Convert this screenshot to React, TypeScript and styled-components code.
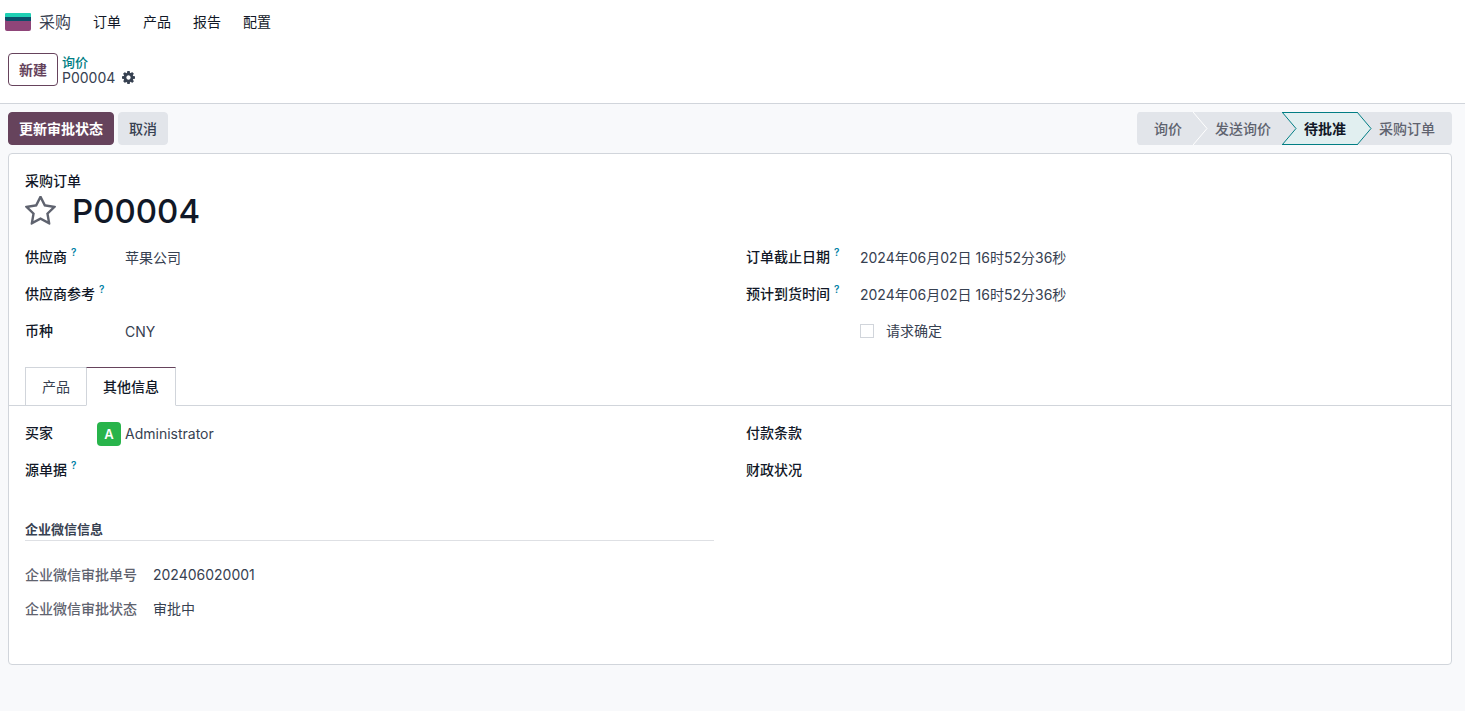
import React, { useState } from 'react';
import styled, { createGlobalStyle, css } from 'styled-components';

const c = {
  text: '#374151',
  dark: '#111827',
  muted: '#5f636f',
  line: '#d1d5db',
  soft: '#e2e5ea',
  page: '#f8f9fb',
  brand: '#66435c',
  teal: '#017e84',
  tealSoft: '#e1eff0',
};

const GlobalStyle = createGlobalStyle`
  *, *::before, *::after { box-sizing: border-box; }
  body {
    margin: 0;
    background: ${c.page};
    color: ${c.text};
    font: 400 14px/20px Inter, "Noto Sans CJK SC", sans-serif;
  }
  button { font: inherit; color: inherit; cursor: pointer; }
  a { text-decoration: none; }
  h1, h2, dl, dd { margin: 0; }
`;

const Header = styled.header`
  background: #fff;
  border-bottom: 1px solid ${c.line};
`;

const NavBar = styled.nav`
  display: flex;
  align-items: center;
  height: 44px;
  padding-left: 5px;
`;

const AppLogo = styled.svg`
  width: 26px;
  height: 18px;
  margin-right: 8px;
`;

const AppName = styled.a`
  color: ${c.text};
  font-size: 16px;
  margin-right: 11px;
`;

const NavLink = styled.a`
  color: ${c.dark};
  padding: 0 11px;
`;

const ControlPanel = styled.div`
  display: flex;
  align-items: center;
  gap: 4px;
  padding: 9px 8px 17px;
`;

const Button = styled.button<{ $kind: 'primary' | 'secondary' | 'outline' }>`
  height: 33px;
  padding: 0 10px;
  border: 1px solid ${c.brand};
  border-radius: 4px;
  font-weight: 600;
  ${({ $kind }) =>
    $kind === 'primary'
      ? css`
          background: ${c.brand};
          color: #fff;
        `
      : $kind === 'secondary'
        ? css`
            background: ${c.soft};
            border-color: ${c.soft};
            font-weight: 500;
          `
        : css`
            background: #fff;
            color: ${c.brand};
          `}
`;

const Breadcrumb = styled.div`
  display: flex;
  flex-direction: column;
  line-height: 16px;
`;

const ParentLink = styled.a`
  color: ${c.teal};
  font-size: 13px;
  font-weight: 500;
`;

const Current = styled.div`
  display: flex;
  align-items: center;
  gap: 7px;
`;

const GearButton = styled.button`
  display: flex;
  padding: 0;
  border: 0;
  background: none;
`;

const Main = styled.main`
  padding: 8px 13px 46px 8px;
`;

const StatusRow = styled.div`
  display: flex;
  justify-content: space-between;
  margin-bottom: 8px;
`;

const Actions = styled.div`
  display: flex;
  gap: 4px;
`;

const StatusBar = styled.div`
  display: flex;
  border-radius: 4px;
  overflow: hidden;
`;

const Step = styled.button<{ $active: boolean; $order: number }>`
  position: relative;
  z-index: ${({ $order }) => 10 - $order};
  height: 33px;
  padding: 0 11px 0 22px;
  border: 0;
  border-block: 1px solid ${({ $active }) => ($active ? c.teal : c.soft)};
  background: ${({ $active }) => ($active ? c.tealSoft : c.soft)};
  color: ${({ $active }) => ($active ? c.dark : c.muted)};
  font-weight: ${({ $active }) => ($active ? 600 : 500)};
  &:first-child { padding-left: 17px; }
  &:last-child { padding-right: 17px; }
`;

const Chevron = styled.svg`
  position: absolute;
  top: -1px;
  left: 100%;
  width: 15px;
  height: 33px;
`;

const Sheet = styled.section`
  border: 1px solid ${c.line};
  border-radius: 4px;
  background: #fff;
  padding: 17px 0 38px;
`;

const Heading = styled.div`
  padding: 0 16px;
  color: ${c.dark};
`;

const Kind = styled.div`
  font-weight: 500;
`;

const TitleRow = styled.div`
  display: flex;
  align-items: center;
  gap: 16px;
  height: 40px;
  margin-bottom: 8px;
`;

const StarButton = styled.button`
  display: flex;
  padding: 0;
  border: 0;
  background: none;
  color: ${c.muted};
`;

const Title = styled.h1`
  font-size: 33px;
  line-height: 40px;
  font-weight: 500;
`;

const Columns = styled.div`
  display: grid;
  grid-template-columns: 1fr 1fr;
  gap: 32px;
  padding: 0 16px;
`;

const Fields = styled.dl<{ $label: number; $row?: number }>`
  display: grid;
  grid-template-columns: ${({ $label }) => $label}px 1fr;
  grid-auto-rows: ${({ $row = 37 }) => $row}px;
  align-content: start;
  align-items: center;
`;

const Term = styled.dt<{ $muted?: boolean }>`
  padding-bottom: ${({ $muted }) => ($muted ? 0 : 2)}px;
  color: ${({ $muted }) => ($muted ? c.muted : c.dark)};
  font-weight: 500;
  white-space: nowrap;
`;

const Help = styled.sup`
  margin-left: 4px;
  color: #0180a5;
  font-size: 10px;
  font-weight: 600;
  line-height: 1;
`;

const Value = styled.dd`
  display: flex;
  align-items: center;
  gap: 4px;
`;

const CheckLabel = styled.label`
  display: flex;
  align-items: center;
  gap: 12px;
  padding-bottom: 2px;
`;

const CheckBox = styled.input`
  appearance: none;
  width: 14px;
  height: 14px;
  margin: 0;
  border: 1px solid ${c.line};
  background: #fff;
  &:checked { background: ${c.brand}; }
`;

const Tabs = styled.div`
  display: flex;
  margin: 17px 0 9px;
  padding-left: 16px;
  border-bottom: 1px solid ${c.line};
`;

const Tab = styled.button<{ $active: boolean }>`
  height: 39px;
  margin-bottom: -1px;
  padding: 0 16px;
  border: 1px solid ${c.line};
  background: #fff;
  & + & { margin-left: -1px; }
  ${({ $active }) =>
    $active &&
    css`
      position: relative;
      border-top-color: ${c.brand};
      border-bottom-color: #fff;
      color: ${c.dark};
      font-weight: 500;
    `}
`;

const Avatar = styled.span`
  display: grid;
  place-items: center;
  width: 24px;
  height: 24px;
  border-radius: 4px;
  background: #28b44b;
  color: #fff;
  font-size: 13px;
  font-weight: 600;
`;

const WeCom = styled.div`
  margin-top: 30px;
`;

const SectionTitle = styled.h2`
  margin-bottom: 17px;
  padding-bottom: 1px;
  border-bottom: 1px solid #dee0e4;
  font-size: 13px;
  line-height: 20px;
  font-weight: 600;
`;

const steps = ['询价', '发送询价', '待批准', '采购订单'];

const COG =
  'M1152 896q0-106-75-181t-181-75-181 75-75 181 75 181 181 75 181-75 75-181zm512-109v222q0 12-8 23t-20 13l-185 28q-19 54-39 91 35 50 107 138 10 12 10 25t-9 23q-27 37-99 108t-94 71q-12 0-26-9l-138-108q-44 23-91 38-16 136-29 186-7 28-36 28h-222q-14 0-24.5-8.5t-11.5-21.5l-28-184q-49-16-90-37l-141 107q-10 9-25 9-14 0-25-11-126-114-165-168-7-10-7-23 0-12 8-23 15-21 51-66.5t54-70.5q-27-50-41-99l-183-27q-13-2-21-12.5t-8-23.5v-222q0-12 8-23t19-13l186-28q14-46 39-92-40-57-107-138-10-12-10-24 0-10 9-23 26-36 98.5-107.5t94.5-71.5q13 0 26 10l138 107q44-23 91-38 16-136 29-186 7-28 36-28h222q14 0 24.5 8.5t11.5 21.5l28 184q49 16 90 37l142-107q9-9 24-9 13 0 25 10 129 119 165 170 7 8 7 22 0 12-8 23-15 21-51 66.5t-54 70.5q26 50 41 98l183 28q13 2 21 12.5t8 23.5z';

const STAR =
  'M1201 1004l306-297-422-62-189-382-189 382-422 62 306 297-73 421 378-199 377 199zm527-357q0 22-26 48l-363 354 86 500q1 7 1 20 0 50-41 50-19 0-40-12l-449-236-449 236q-22 12-40 12-21 0-31.5-14.5t-10.5-35.5q0-6 2-20l86-500-364-354q-25-27-25-48 0-37 56-46l502-73 225-455q19-41 49-41t49 41l225 455 502 73q56 9 56 46z';

export default function App() {
  const [tab, setTab] = useState(1);
  const activeStep = 2;

  return (
    <>
      <GlobalStyle />
      <Header>
        <NavBar>
          <AppLogo viewBox="0 0 26 18" aria-hidden="true">
            <path d="M0 4h26v12a2 2 0 0 1-2 2H2a2 2 0 0 1-2-2z" fill="#8f4579" />
            <path d="M0 4h26v4H2a2 2 0 0 1-2-2z" fill="#0b4f69" />
            <path d="M1 0h24a1 1 0 0 1 1 1v3H0V1a1 1 0 0 1 1-1z" fill="#1fd0b4" />
          </AppLogo>
          <AppName href="#purchase">采购</AppName>
          {['订单', '产品', '报告', '配置'].map((item) => (
            <NavLink key={item} href="#menu">{item}</NavLink>
          ))}
        </NavBar>
        <ControlPanel>
          <Button $kind="outline">新建</Button>
          <Breadcrumb>
            <ParentLink href="#rfq">询价</ParentLink>
            <Current>
              <span>P00004</span>
              <GearButton aria-label="设置">
                <svg width="13" height="13" viewBox="128 128 1536 1536" fill="currentColor"><path d={COG} /></svg>
              </GearButton>
            </Current>
          </Breadcrumb>
        </ControlPanel>
      </Header>

      <Main>
        <StatusRow>
          <Actions>
            <Button $kind="primary">更新审批状态</Button>
            <Button $kind="secondary">取消</Button>
          </Actions>
          <StatusBar>
            {steps.map((step, i) => {
              const active = i === activeStep;
              const edge = active || i + 1 === activeStep ? c.teal : '#fff';
              return (
                <Step key={step} $active={active} $order={i}>
                  {step}
                  {i < steps.length - 1 && (
                    <Chevron viewBox="0 0 15 33" aria-hidden="true">
                      <path d="M0 0L14 16.5L0 33z" fill={active ? c.tealSoft : c.soft} />
                      <path d="M0 0L14 16.5L0 33" fill="none" stroke={edge} />
                    </Chevron>
                  )}
                </Step>
              );
            })}
          </StatusBar>
        </StatusRow>

        <Sheet>
          <Heading>
            <Kind>采购订单</Kind>
            <TitleRow>
              <StarButton aria-label="优先">
                <svg width="31" height="31" viewBox="64 80 1664 1664" fill="currentColor"><path d={STAR} /></svg>
              </StarButton>
              <Title>P00004</Title>
            </TitleRow>
          </Heading>

          <Columns>
            <Fields $label={100}>
              <Term>供应商<Help>?</Help></Term>
              <Value>苹果公司</Value>
              <Term>供应商参考<Help>?</Help></Term>
              <Value />
              <Term>币种</Term>
              <Value>CNY</Value>
            </Fields>
            <Fields $label={114}>
              <Term>订单截止日期<Help>?</Help></Term>
              <Value>2024年06月02日 16时52分36秒</Value>
              <Term>预计到货时间<Help>?</Help></Term>
              <Value>2024年06月02日 16时52分36秒</Value>
              <Term />
              <Value>
                <CheckLabel><CheckBox type="checkbox" />请求确定</CheckLabel>
              </Value>
            </Fields>
          </Columns>

          <Tabs role="tablist">
            {['产品', '其他信息'].map((name, i) => (
              <Tab key={name} role="tab" aria-selected={tab === i} $active={tab === i} onClick={() => setTab(i)}>
                {name}
              </Tab>
            ))}
          </Tabs>

          <Columns>
            <div>
              <Fields $label={72}>
                <Term>买家</Term>
                <Value><Avatar>A</Avatar>Administrator</Value>
                <Term>源单据<Help>?</Help></Term>
                <Value />
              </Fields>
              <WeCom>
                <SectionTitle>企业微信信息</SectionTitle>
                <Fields $label={128} $row={34}>
                  <Term $muted>企业微信审批单号</Term>
                  <Value>202406020001</Value>
                  <Term $muted>企业微信审批状态</Term>
                  <Value>审批中</Value>
                </Fields>
              </WeCom>
            </div>
            <Fields $label={72}>
              <Term>付款条款</Term>
              <Value />
              <Term>财政状况</Term>
              <Value />
            </Fields>
          </Columns>
        </Sheet>
      </Main>
    </>
  );
}
